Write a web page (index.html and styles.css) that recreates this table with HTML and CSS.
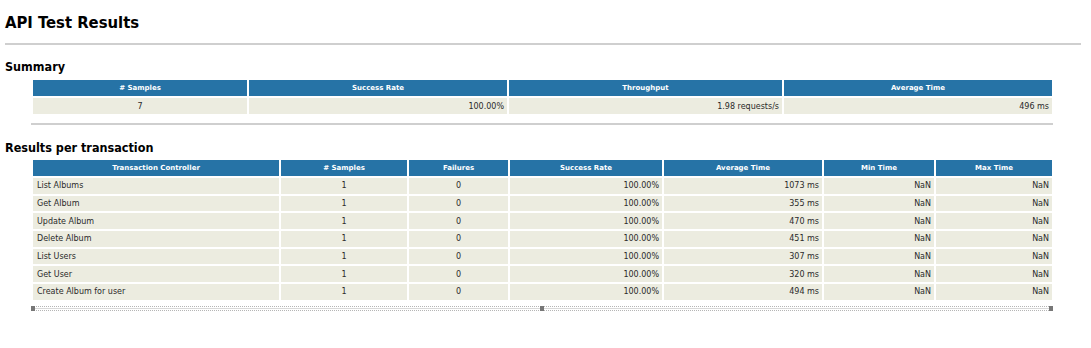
FILE: index.html
```html
<!DOCTYPE html>
<html>
<head>
<meta charset="utf-8">
<title>API Test Results</title>
<link rel="stylesheet" href="styles.css">
</head>
<body>
<h1 class="title">API Test Results</h1>
<hr class="rule">
<h2 class="section">Summary</h2>
<table class="grid summary">
  <colgroup>
    <col class="s1"><col class="s2"><col class="s3"><col class="s4">
  </colgroup>
  <thead>
    <tr><th># Samples</th><th>Success Rate</th><th>Throughput</th><th>Average Time</th></tr>
  </thead>
  <tbody>
    <tr><td class="c">7</td><td class="r">100.00%</td><td class="r">1.98 requests/s</td><td class="r">496 ms</td></tr>
  </tbody>
</table>
<hr class="rule small">
<h2 class="section second">Results per transaction</h2>
<table class="grid results">
  <colgroup>
    <col class="t1"><col class="t2"><col class="t3"><col class="t4"><col class="t5"><col class="t6"><col class="t7">
  </colgroup>
  <thead>
    <tr><th>Transaction Controller</th><th># Samples</th><th>Failures</th><th>Success Rate</th><th>Average Time</th><th>Min Time</th><th>Max Time</th></tr>
  </thead>
  <tbody>
    <tr><td>List Albums</td><td class="c">1</td><td class="c">0</td><td class="r">100.00%</td><td class="r">1073 ms</td><td class="r">NaN</td><td class="r">NaN</td></tr>
    <tr><td>Get Album</td><td class="c">1</td><td class="c">0</td><td class="r">100.00%</td><td class="r">355 ms</td><td class="r">NaN</td><td class="r">NaN</td></tr>
    <tr><td>Update Album</td><td class="c">1</td><td class="c">0</td><td class="r">100.00%</td><td class="r">470 ms</td><td class="r">NaN</td><td class="r">NaN</td></tr>
    <tr><td>Delete Album</td><td class="c">1</td><td class="c">0</td><td class="r">100.00%</td><td class="r">451 ms</td><td class="r">NaN</td><td class="r">NaN</td></tr>
    <tr><td>List Users</td><td class="c">1</td><td class="c">0</td><td class="r">100.00%</td><td class="r">307 ms</td><td class="r">NaN</td><td class="r">NaN</td></tr>
    <tr><td>Get User</td><td class="c">1</td><td class="c">0</td><td class="r">100.00%</td><td class="r">320 ms</td><td class="r">NaN</td><td class="r">NaN</td></tr>
    <tr><td>Create Album for user</td><td class="c">1</td><td class="c">0</td><td class="r">100.00%</td><td class="r">494 ms</td><td class="r">NaN</td><td class="r">NaN</td></tr>
  </tbody>
</table>
<div class="resizer">
  <span class="knob"></span><span class="knob"></span><span class="knob"></span>
</div>
</body>
</html>
```

FILE: styles.css
```css
html, body {
  margin: 0;
  padding: 0;
  background: #ffffff;
}
body {
  padding: 0 10px 0 5px;
  font-family: "DejaVu Sans", Verdana, sans-serif;
  color: #000;
}
.title {
  font-size: 16.5px;
  line-height: 20px;
  font-weight: bold;
  font-stretch: condensed;
  margin: 0;
  padding-top: 13px;
}
.rule {
  border: 0;
  border-top: 2px solid #cfcfcf;
  margin: 10px 0 0 0;
  height: 0;
}
.rule.small {
  margin: 7px 28px 0 26px;
}
.section {
  font-size: 12.5px;
  line-height: 16px;
  font-weight: bold;
  font-stretch: condensed;
  margin: 14px 0 0 0;
}
.section.second {
  margin-top: 15px;
}
.grid {
  border-collapse: separate;
  border-spacing: 2px;
  table-layout: fixed;
  width: 1023px;
  margin: 3px 0 0 26px;
  font-size: 8px;
}
.results {
  margin-top: 2px;
}
.grid th {
  background: #2673a6;
  color: #ffffff;
  font-size: 7px;
  font-weight: bold;
  height: 16px;
  padding: 0 3px;
  text-align: center;
  vertical-align: middle;
}
.grid td {
  background: #ecece0;
  color: #2a2a2a;
  height: 16px;
  padding: 0 4px;
  text-align: left;
  vertical-align: middle;
  white-space: nowrap;
}
.results td {
  height: 15.7px;
}
.grid td.c { text-align: center; }
.grid td.r { text-align: right; padding-right: 3px; }
.s1 { width: 214px; }
.s2 { width: 258px; }
.s3 { width: 273px; }
.s4 { width: 268px; }
.t1 { width: 246px; }
.t2 { width: 126px; }
.t3 { width: 99px; }
.t4 { width: 152px; }
.t5 { width: 158px; }
.t6 { width: 110px; }
.t7 { width: 116px; }
.resizer {
  margin: 4px 28px 0 26px;
  height: 3px;
  border-top: 1px dotted #b5b5b5;
  border-bottom: 1px dotted #b5b5b5;
  background: linear-gradient(#ffffff 0, #ffffff 1px, #d8d8d8 1px, #d8d8d8 2px, #ffffff 2px);
  display: flex;
  justify-content: space-between;
  align-items: center;
}
.knob {
  width: 4px;
  height: 5px;
  background: #777777;
}
```
